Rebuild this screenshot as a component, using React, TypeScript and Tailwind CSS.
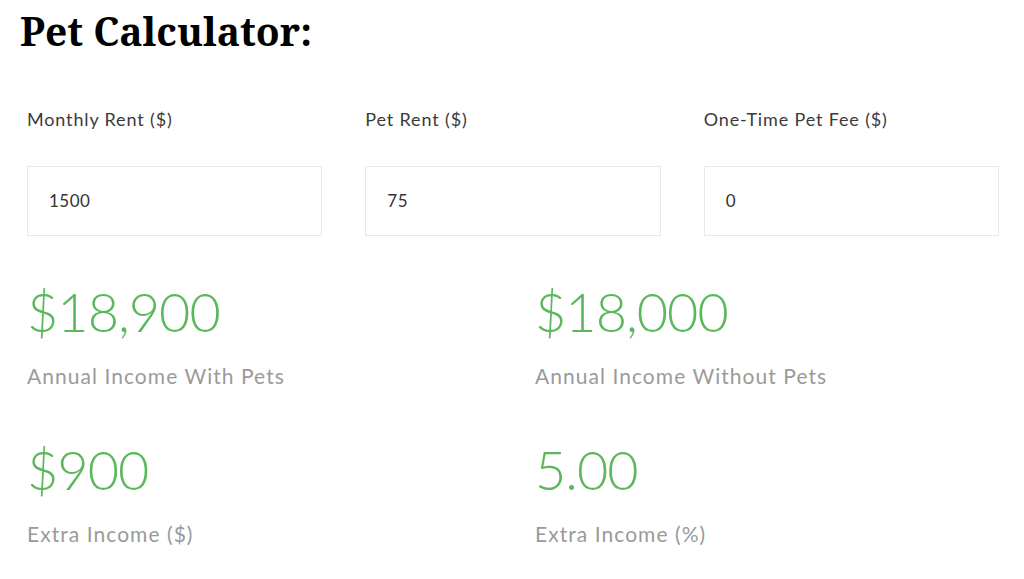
import React from "react";

const sans = { fontFamily: "Lato, 'Open Sans', sans-serif" };

function Field({ label, value }: { label: string; value: string }) {
  return (
    <div className="flex flex-col">
      <label className="text-[18px] leading-[24px] text-[#3a3a3a] font-normal tracking-[0.85px]" style={sans}>{label}</label>
      <div className="mt-[35px] h-[70px] border border-[#e8e8e8] flex items-center pl-[21px] text-[17px] text-[#333] tracking-[0.5px]" style={sans}>
        {value}
      </div>
    </div>
  );
}

function Stat({ value, label }: { value: string; label: string }) {
  return (
    <div className="flex flex-col">
      <div className="text-[54px] leading-[64px] font-light text-[#5cb85c] tracking-[-1px]" style={sans}>{value}</div>
      <div className="mt-[19px] text-[21px] leading-[26px] text-[#9a9a9a] font-normal tracking-[1.05px]" style={sans}>{label}</div>
    </div>
  );
}

export default function App() {
  return (
    <div className="w-[1024px] h-[579px] bg-white overflow-hidden">
      <h1
        className="pl-[20px] pt-[6px] text-[39px] leading-[50px] font-bold text-black"
        style={{ fontFamily: "'Noto Serif', 'DejaVu Serif', 'Liberation Serif', serif" }}
      >
        Pet Calculator:
      </h1>
      <div className="px-[27px] pt-[51px]">
        <div className="grid grid-cols-3 gap-x-[43px] w-[972px]">
          <Field label="Monthly Rent ($)" value="1500" />
          <Field label="Pet Rent ($)" value="75" />
          <Field label="One-Time Pet Fee ($)" value="0" />
        </div>
        <div className="grid grid-cols-2 w-[1016px] mt-[44px] gap-y-[49px]">
          <Stat value="$18,900" label="Annual Income With Pets" />
          <Stat value="$18,000" label="Annual Income Without Pets" />
          <Stat value="$900" label="Extra Income ($)" />
          <Stat value="5.00" label="Extra Income (%)" />
        </div>
      </div>
    </div>
  );
}
